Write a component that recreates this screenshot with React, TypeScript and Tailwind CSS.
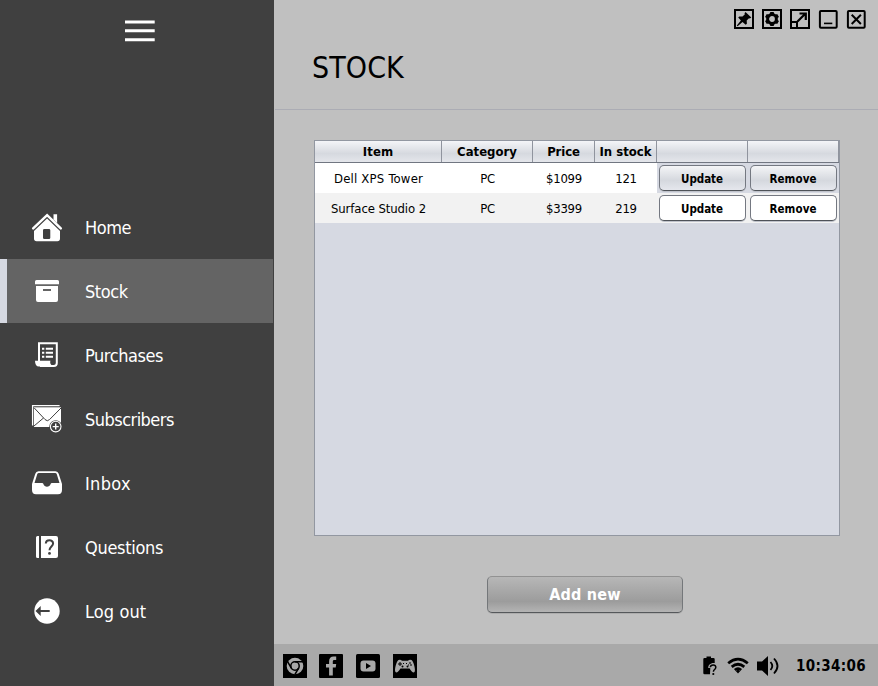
import React from "react";

type IconProps = { children: React.ReactNode; w?: number; h?: number };

function Icon({ children, w = 32, h = 32 }: IconProps) {
  return (
    <svg width={w} height={h} viewBox={`0 0 ${w} ${h}`} fill="currentColor" className="block shrink-0">
      {children}
    </svg>
  );
}

const HomeIcon = () => (
  <Icon>
    <path d="M22.500 3.200h3.600v9l-3.600-3.600z" />
    <path d="M2.200 17.400 16.100 4.200 29.800 17.400" fill="none" stroke="currentColor" strokeWidth="2.500" strokeLinecap="round" />
    <path fillRule="evenodd" d="M16.100 7.600 29 20v7.600a2.600 2.600 0 0 1-2.600 2.600H5.600A2.600 2.600 0 0 1 3 27.600V20zM13.300 18a1.300 1.300 0 0 0-1.300 1.300v7.400a1.300 1.300 0 0 0 1.300 1.300h4.700a1.300 1.300 0 0 0 1.300-1.300v-7.400a1.300 1.300 0 0 0-1.300-1.300z" />
  </Icon>
);

const StockIcon = () => (
  <Icon>
    <path d="M5.500 5h21a1.500 1.500 0 0 1 1.500 1.500V9.300H4V6.500A1.500 1.500 0 0 1 5.500 5z" />
    <path fillRule="evenodd" d="M5 11h22v14a2 2 0 0 1-2 2H7a2 2 0 0 1-2-2zM12 14v1.900h8V14z" />
  </Icon>
);

const PurchasesIcon = () => (
  <Icon>
    <path d="M8 22.500V4.200h17.800V24q0 3-3 3H9" fill="none" stroke="currentColor" strokeWidth="2" />
    <path d="M4 21.700h15.500c-1.300 3 1.500 5 3.500 5.800H8Q4 27.500 4 21.700z" />
    <path d="M11 9.800h2.300m1.500 0H22M11 13.800h2.300m1.500 0H22M11 17.800h2.300m1.500 0H22" stroke="currentColor" strokeWidth="2" />
  </Icon>
);

const SubscribersIcon = () => (
  <Icon>
    <path d="M1.600 22.500V2.700h27" fill="none" stroke="currentColor" strokeWidth="1.300" />
    <path d="M3 4.300h27V24H3z" />
    <path d="M3.300 5 14 16.500q2.300 2.500 4.600 0L30 5M3 23l9.500-8" fill="none" stroke="#404040" strokeWidth="1" />
    <circle cx="24.700" cy="23.600" r="6.400" fill="#404040" />
    <circle cx="24.700" cy="23.600" r="5.300" fill="none" stroke="currentColor" strokeWidth="1.100" />
    <path d="M24.700 20.600v6m-3-3h6" stroke="currentColor" strokeWidth="1.400" />
  </Icon>
);

const InboxIcon = () => (
  <Icon>
    <path fillRule="evenodd" d="M7.500 4.200h17q2.400 0 3.200 2.600L31 17v6q0 4.200-4 4.200H5q-4 0-4-4.200v-6L4.300 6.800q.8-2.600 3.200-2.600zM7.800 5.900q-1.200 0-1.600 1.300L3.500 16H11q1.200 0 1.500 1.300c.8 3.200 6.200 3.200 7 0Q19.800 16 21 16h7.500l-2.700-8.800q-.4-1.300-1.600-1.300z" />
  </Icon>
);

const QuestionsIcon = () => (
  <Icon>
    <path d="M6.500 5H8v22H6.500A1.500 1.500 0 0 1 5 25.500v-19A1.500 1.500 0 0 1 6.500 5zM10 5h15a2 2 0 0 1 2 2v18a2 2 0 0 1-2 2H10z" />
    <path d="M14.800 12.600c.1-4.300 7.300-4.300 7.300-.1 0 2.900-3.600 3.300-3.600 6.800" fill="none" stroke="#404040" strokeWidth="2" />
    <circle cx="18.500" cy="22.400" r="1.400" fill="#404040" />
  </Icon>
);

const LogoutIcon = () => (
  <Icon>
    <circle cx="16" cy="16" r="12.700" />
    <path d="M4.500 16 9.700 11v3.900h9V17h-9V21z" fill="#404040" />
  </Icon>
);

const nav = [
  { label: "Home", icon: <HomeIcon />, spacing: "tracking-[-0.45px]" },
  { label: "Stock", icon: <StockIcon />, spacing: "tracking-[-0.45px]", active: true },
  { label: "Purchases", icon: <PurchasesIcon />, spacing: "tracking-[-0.43px]" },
  { label: "Subscribers", icon: <SubscribersIcon />, spacing: "tracking-[-0.53px]" },
  { label: "Inbox", icon: <InboxIcon />, spacing: "tracking-[0.35px]" },
  { label: "Questions", icon: <QuestionsIcon />, spacing: "tracking-[-0.3px]" },
  { label: "Log out", icon: <LogoutIcon />, spacing: "tracking-[0.1px]" },
];

function Sidebar() {
  return (
    <aside className="flex w-[274px] shrink-0 flex-col bg-[#404040] text-white">
      <button className="ml-[125px] mt-5 w-[30px]" aria-label="Menu">
        <Icon w={30} h={24}>
          <path d="M0 .4h29.700v3H0zM0 9.300h29.700v3H0zM0 18.300h29.700v3H0z" />
        </Icon>
      </button>
      <nav className="mt-[151px] w-[273px] text-[18px]">
        {nav.map((n) => (
          <a
            key={n.label}
            className={`flex h-16 items-center border-l-[7px] pl-6 ${n.active ? "border-[#d6d9e2] bg-[#646464]" : "border-transparent"}`}
          >
            {n.icon}
            <span className={`ml-[22px] pt-0.5 leading-6 ${n.spacing}`}>{n.label}</span>
          </a>
        ))}
      </nav>
    </aside>
  );
}

function WindowControls() {
  return (
    <div className="flex justify-end gap-2 pr-3 pt-[9px] text-black">
      <Icon w={20} h={20}>
        <path d="M1 1h18v18H1z" fill="none" stroke="currentColor" strokeWidth="2" />
        <path d="m11.500 3 5.800 5.500-1.500 1-.8-.3-2.300 2.400.2 3.200-1.200 1L8.500 13 3.600 17.200l-.8-.8 4.100-4.900-2.700-3 1.100-1.100 3.200.2 2.400-2.400-.4-.9z" />
      </Icon>
      <Icon w={20} h={20}>
        <path d="M1 1h18v18H1z" fill="none" stroke="currentColor" strokeWidth="2" />
        <circle cx="10" cy="10" r="4.400" fill="none" stroke="currentColor" strokeWidth="3" />
        <path d="M8.300 3h3.400l.6 2.500H7.700zM8.300 17h3.400l.6-2.500H7.700zM3 7.900 4.800 4.900l2.500 1-2 3.700zM17 7.900 15.200 4.900l-2.500 1 2 3.700zM3 12.100l1.800 3 2.500-1-2-3.700zM17 12.100l-1.800 3-2.500-1 2-3.700z" />
      </Icon>
      <Icon w={20} h={20}>
        <path d="M1 1h18v18H1zM1 13h6v6" fill="none" stroke="currentColor" strokeWidth="2" />
        <path d="m7.500 12.500 8-8M9.500 4.500h6.300V11" fill="none" stroke="currentColor" strokeWidth="2.200" />
      </Icon>
      <Icon w={20} h={20}>
        <rect x="1.900" y="1.900" width="16.800" height="16.800" rx="1" fill="none" stroke="currentColor" strokeWidth="2" />
        <path d="M6 13.600h8.300v1.600H6z" />
      </Icon>
      <Icon w={20} h={20}>
        <rect x="1.900" y="1.900" width="16.800" height="16.800" rx="1" fill="none" stroke="currentColor" strokeWidth="2" />
        <path d="m5.700 5.800 9.200 9.200m0-9.200-9.200 9.200" stroke="currentColor" strokeWidth="2" />
      </Icon>
    </div>
  );
}

const cols = "grid grid-cols-[127px_91px_62px_62px_91px_91px]";
const rows = [
  { item: "Dell XPS Tower", cat: "PC", price: "$1099", qty: "121", spacing: "tracking-[0.2px]" },
  { item: "Surface Studio 2", cat: "PC", price: "$3399", qty: "219", spacing: "tracking-[-0.1px]" },
];

function RowButton({ label, selected }: { label: string; selected: boolean }) {
  return (
    <div className={`flex items-center justify-center ${selected ? "bg-[#d6d9e2]" : ""}`}>
      <button
        className={`mr-px h-[26px] w-[87px] rounded-[5px] border border-[#747881] border-b-[#4e5258] pt-px text-[11.500px] font-bold leading-4 shadow-[0_1px_0_#bfc2ca] ${
          label === "Update" ? "tracking-[-0.05px]" : "tracking-[0.1px]"
        } ${selected ? "bg-linear-to-b from-[#f4f5f7] via-[#d5d8de] via-60% to-[#e5e7ed]" : "bg-white"}`}
      >
        {label}
      </button>
    </div>
  );
}

function StockTable() {
  const heads = [
    { label: "Item", spacing: "tracking-[0.1px]" },
    { label: "Category", spacing: "tracking-[0px]" },
    { label: "Price", spacing: "tracking-[-0.1px]" },
    { label: "In stock", spacing: "tracking-[0px]" },
    { label: "", spacing: "" },
    { label: "", spacing: "" },
  ];
  return (
    <section className="ml-10 mt-[30px] h-[396px] w-[526px] border border-[#9297a1] bg-[#d6d9e2] text-black">
      <div className={`${cols} h-[22px] border-b border-[#717681] bg-linear-to-b from-[#f4f5f8] via-[#d6d9df] via-60% to-[#e4e6eb] text-[13px] font-bold`}>
        {heads.map((h, i) => (
          <div key={i} className={`flex items-center justify-center whitespace-nowrap border-r border-[#90949e] leading-5 ${h.spacing}`}>
            {h.label}
          </div>
        ))}
      </div>
      {rows.map((r, i) => (
        <div key={r.item} className={`${cols} h-[30px] text-[13px] tracking-[-0.25px] ${i ? "bg-[#f2f2f2]" : "bg-white"}`}>
          <div className={`flex items-center justify-center pt-0.5 ${r.spacing}`}>{r.item}</div>
          <div className="flex items-center justify-center pt-0.5">{r.cat}</div>
          <div className="flex items-center justify-center pt-0.5">{r.price}</div>
          <div className="flex items-center justify-center pt-0.5">{r.qty}</div>
          <RowButton label="Update" selected={i === 0} />
          <RowButton label="Remove" selected={i === 0} />
        </div>
      ))}
    </section>
  );
}

function StatusBar() {
  return (
    <footer className="flex h-[42px] items-center bg-[#a9a9a9] pl-[9px] pr-3 pt-[2px] text-black">
      <Icon w={24} h={24}>
        <path d="M0 0h24v24H0z" />
        <circle cx="12" cy="12" r="8.300" fill="#a9a9a9" />
        <circle cx="12" cy="12" r="4.200" fill="none" stroke="currentColor" strokeWidth="1.500" />
        <path d="M12 7.800h8M8.300 14 4.400 7.300M15.700 14l-3.900 6.700" stroke="currentColor" strokeWidth="1.500" />
      </Icon>
      <div className="ml-3">
        <Icon w={24} h={24}>
          <rect width="24" height="24" rx="1" />
          <path d="M10.100 21.500v-8H7V9.900h3.100V7.400C10.100 4.300 11.700 2.500 14.700 2.500h2.500V6h-1.800c-1.200 0-1.600.6-1.600 1.700v2.200h3.400l-.5 3.600h-2.900v8z" fill="#a9a9a9" />
        </Icon>
      </div>
      <div className="ml-[13px]">
        <Icon w={24} h={24}>
          <rect width="24" height="24" rx="1.500" />
          <rect x="4.500" y="6.500" width="15" height="11" rx="3" fill="#a9a9a9" />
          <path d="m10 9 5 3-5 3z" />
        </Icon>
      </div>
      <div className="ml-[13px]">
        <Icon w={24} h={24}>
          <path d="M0 0h24v24H0z" />
          <path d="M5.500 6q2-1 3.500.7h6Q16.500 5 18.500 6c2 1.200 4.500 10 3 12-1.200 1.300-2.600-.2-5-3.500h-9C5.100 17.800 3.700 19.300 2.500 18c-1.500-2 1-10.800 3-12z" fill="#a9a9a9" />
          <path d="M7 8v4M5 10h4" stroke="currentColor" />
          <path d="M16 8.500h2v1h-2zm1 2h2v1h-2zm-2 0h1v1h-1zM10 9h1v1h-1zm3 0h1v1h-1z" />
          <circle cx="9.500" cy="12.500" r="1" />
          <circle cx="14.500" cy="12.500" r="1" />
        </Icon>
      </div>
      <div className="ml-auto">
        <Icon w={16} h={22}>
          <path d="M4.500 1.500H9V3h2.500q1.200 0 1.200 1.200V8C9 7.300 5.800 10 6.300 13h2l-.3 6.300H2.500q-1.200 0-1.200-1.200V4.200Q1.300 3 2.500 3h2z" />
          <path d="M8.300 12.300c.3-3.400 5.900-3.100 5.500.2-.2 2-2.400 2-2.400 4.200" fill="none" stroke="currentColor" strokeWidth="1.500" />
          <circle cx="11.300" cy="19" r="1.100" />
        </Icon>
      </div>
      <div className="ml-[9px]">
        <Icon w={22} h={18}>
          <path d="M1.200 6.300q9.800-8.200 19.600 0M4.700 9.900q6.300-5.300 12.600 0M7.800 13q3.200-2.600 6.400 0" fill="none" stroke="currentColor" strokeWidth="2.700" />
          <path d="m8.700 14 2.300-1.500 2.300 1.500L11 16.600z" />
        </Icon>
      </div>
      <div className="ml-2">
        <Icon w={22} h={22}>
          <path d="M0 6.500h5L11 1v20l-6-5.500H0z" />
          <path d="M13.500 7q3.600 4 0 8M17 3.500q7 7.500 0 15" fill="none" stroke="currentColor" strokeWidth="1.800" />
        </Icon>
      </div>
      <time className="ml-[17px] w-[70px] whitespace-nowrap text-[15px] font-bold tracking-[0.35px]">10:34:06</time>
    </footer>
  );
}

export default function App() {
  return (
    <div className="flex h-[686px] w-[878px] overflow-hidden bg-[#c0c0c0] font-['DejaVu_Sans_Condensed','DejaVu_Sans',sans-serif]">
      <Sidebar />
      <main className="flex min-w-0 flex-1 flex-col">
        <header className="ml-px h-[110px] border-b border-[#abacb4]">
          <WindowControls />
          <h1 className="ml-[37px] mt-[19px] text-[30px] leading-10 tracking-[0.1px] text-black">STOCK</h1>
        </header>
        <StockTable />
        <button className="ml-[213px] mt-10 h-[37px] w-[196px] rounded-[5px] border border-[#74777a] border-t-[#929292] border-b-[#55585b] bg-linear-to-b from-[#b7b7b7] via-[#9c9c9c] via-70% to-[#b4b4b4] text-[16px] font-bold tracking-[0.200px] text-white shadow-[0_1px_0_#adadad]">
          Add new
        </button>
        <div className="flex-1" />
        <StatusBar />
      </main>
    </div>
  );
}
